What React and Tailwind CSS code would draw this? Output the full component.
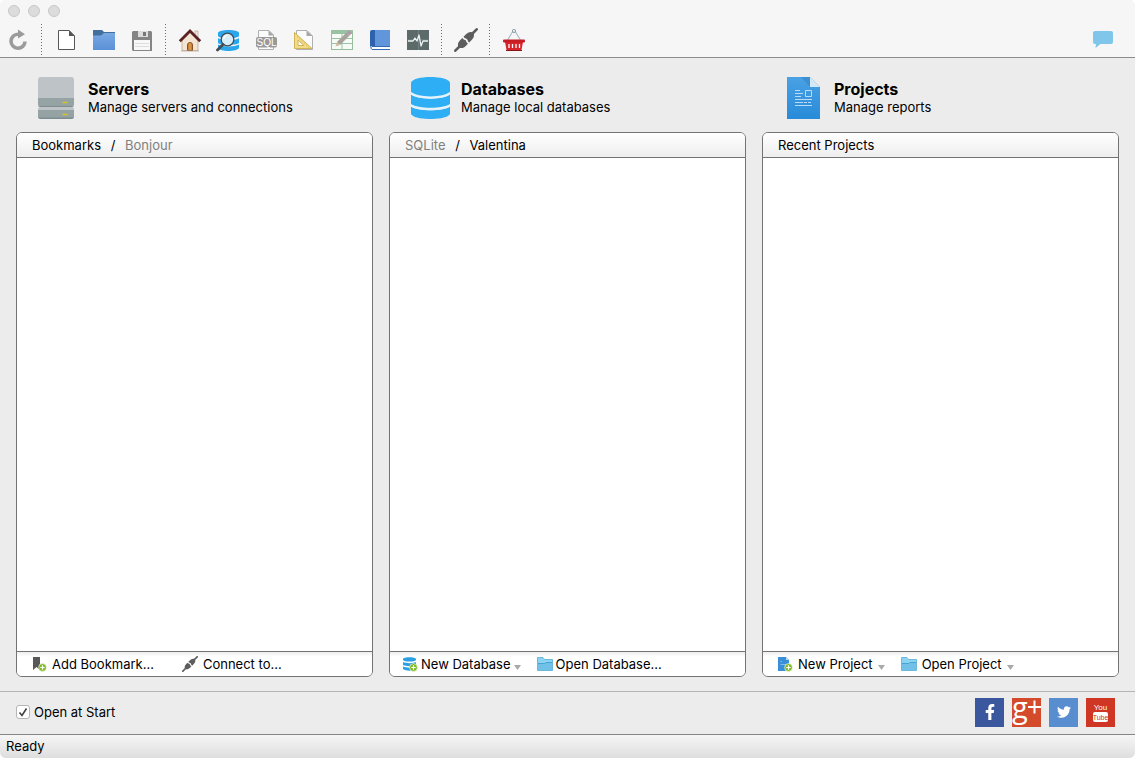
import React, { useState } from 'react';
import { FaFacebookF, FaTwitter } from 'react-icons/fa';

const Icon = ({ children, className = 'h-6 w-6', viewBox = '0 0 24 24' }) => (
  <svg className={className} viewBox={viewBox} fill="none" aria-hidden="true">
    {children}
  </svg>
);

const RefreshIcon = () => (
  <Icon>
    <path d="M13 6.200H12A7 7 0 1 0 19 13.500" stroke="#9b9b9b" strokeWidth="3.600" />
    <path d="M12 1.500 19 6.200 12 10.500Z" fill="#9b9b9b" />
  </Icon>
);

const NewIcon = () => (
  <Icon>
    <path d="M4.500 2.500H15L20.500 8V21.500H4.500Z" fill="#fff" stroke="#565656" />
    <path d="M15 2 21 8H15Z" fill="#565656" />
  </Icon>
);

const FolderIcon = () => (
  <Icon>
    <path d="M1 2H10L12 4H23V12H1Z" fill="#436f9c" />
    <path d="M1 7.500H9L12 5H23V22H1Z" fill="url(#folderFill)" />
    <defs>
      <linearGradient id="folderFill" x1="0" y1="5" x2="0" y2="22" gradientUnits="userSpaceOnUse">
        <stop stopColor="#79a9e4" />
        <stop offset="1" stopColor="#5a90d6" />
      </linearGradient>
    </defs>
  </Icon>
);

const SaveIcon = () => (
  <Icon>
    <path d="M3 3H21L22 4V23H3L2 22V4Z" fill="#858585" />
    <rect x="8" y="3" width="10" height="6" fill="#dcdcdc" />
    <rect x="13" y="4" width="3" height="4" fill="#777" />
    <rect x="4" y="12" width="16" height="10" fill="#f8f8f8" />
    <path d="M5 15.500H19M5 18.500H19" stroke="#ddd" />
  </Icon>
);

const HomeIcon = () => (
  <Icon>
    <rect x="17" y="3" width="3" height="7" fill="#f1e3d5" stroke="#b29d8f" strokeWidth=".6" />
    <path d="M4 12 12 4 20 12V22.500H4Z" fill="#f3e4d3" stroke="#b5a08e" strokeWidth=".7" />
    <path d="M1.800 13.200 12 3 22.200 13.200" stroke="#5b2124" strokeWidth="2.800" />
    <path d="M9.500 22.500V17Q9.500 14.500 12 14.500T14.500 17V22.500Z" fill="#c98238" stroke="#87501f" />
    <path d="M12 15V22" stroke="#e6a95c" />
    <path d="M3 23H21" stroke="#b9aa99" strokeWidth=".8" />
  </Icon>
);

const BrowseDbIcon = () => (
  <Icon>
    <path d="M2 5C2 1 23 1 23 5V8C22 11 3 11 2 8Z" fill="#29a6ec" />
    <path d="M2 10C5 13 20 13 23 10V15C20 17.500 5 17.500 2 15Z" fill="#29a6ec" />
    <path d="M2 16.500C6 19 19 19 23 16.500V20C21 24 4 24 2 20Z" fill="#29a6ec" />
    <circle cx="11.500" cy="11.500" r="6.300" fill="#d9edf8" stroke="#434c53" strokeWidth="1.300" />
    <path d="M7.500 11A4.500 4.500 0 0 1 11 7.500" stroke="#fff" strokeWidth="1.200" />
    <path d="M7 16.500 1.500 22" stroke="#454d54" strokeWidth="2.800" strokeLinecap="round" />
  </Icon>
);

const SqlIcon = () => (
  <Icon>
    <path d="M4.500 21.500V2.500H15L19.500 7V21.500Z" fill="#fbfbfb" stroke="#b0b0b0" />
    <path d="M14.500 2.500V7.500H20Z" fill="#a6a6a6" />
    <rect x="2" y="9" width="21" height="10.500" rx="2" fill="#999" />
    <text x="12.500" y="18" textAnchor="middle" fontSize="10" fill="#fff" className="font-['Liberation_Sans']">
      SQL
    </text>
  </Icon>
);

const DesignIcon = () => (
  <Icon>
    <path d="M4.500 2.500H15L20.500 8V21.500H4.500Z" fill="#fbfbfb" stroke="#b0b0b0" />
    <path d="M14.500 2.500V8H20.500Z" fill="#a8a8a8" />
    <path fillRule="evenodd" d="M2.500 4.500V20.500H20Z M6 12V17.500H12Z" fill="#f3dc88" stroke="#d1b456" />
    <path d="M5 8.500 16.500 19.500" stroke="#c9aa4b" strokeDasharray="1 1.500" />
  </Icon>
);

const TableIcon = () => (
  <Icon>
    <rect x="1.500" y="2.500" width="21" height="19" fill="#f7fbf7" stroke="#96bd9d" />
    <rect x="1" y="2" width="22" height="4" fill="#98c3a2" />
    <path d="M1 10.500H23M1 15.500H23M12 6V22" stroke="#9bc3a3" />
    <path d="M8.500 15.500 18 6" stroke="#a9a19b" strokeWidth="4.500" />
    <path d="M18 6 20.500 3.500" stroke="#ac9da9" strokeWidth="4.500" />
    <path d="M5.500 18.500 7 14 10 17Z" fill="#d3b99d" />
  </Icon>
);

const BookIcon = () => (
  <Icon>
    <path d="M4 2H22V18.500H4Z" fill="#6196da" />
    <path d="M2 4Q2 2 4 2H7V18H4Q2 18 2 20Z" fill="#2e62ad" />
    <path d="M4 18.500H22V21.500H4Q1.500 20 4 18.500Z" fill="#fff" />
    <path d="M22 18.500H4Q1.500 20 4 21.500H22" stroke="#346ab2" />
  </Icon>
);

const MonitorIcon = () => (
  <Icon>
    <rect x="1" y="2" width="22" height="20" fill="#5d6a6a" />
    <path d="M1 12H23M12.500 2V22" stroke="#718080" />
    <path d="M2 13H7L9 10 11 13 13 7 15 18 17 13H22" stroke="#edf2f2" strokeWidth="1.300" strokeLinejoin="round" />
  </Icon>
);

const PlugIcon = ({ className }) => (
  <Icon className={className}>
    <path d="M1.300 22.700 6 18M18 6 22.700 1.300" stroke="#5d5d5d" strokeWidth="2.600" strokeLinecap="round" />
    <g fill="#5d5d5d" transform="rotate(-45 12 12)">
      <path d="M1.500 12C3 8.500 5.500 8 8 8H10.800V10Q12.500 12 10.800 14V16H8C5.500 16 3 15.500 1.500 12Z" />
      <path d="M22.500 12C21 8.500 18.500 8 16 8H12.500V9.500Q14.300 12 12.500 14.500V16H16C18.500 16 21 15.500 22.500 12Z" />
    </g>
  </Icon>
);

const BasketIcon = () => (
  <Icon>
    <path d="M5 13 11 3M19 13 13 3" stroke="#aabdc8" strokeWidth="1.200" />
    <circle cx="12" cy="3" r="1.600" stroke="#8f9da7" />
    <path d="M3 14H21L19.500 22H4.500Z" fill="#d8252b" />
    <rect x="1" y="11.500" width="22" height="3" rx="1" fill="#c61c24" />
    <path d="M7 16V20M10.500 16V20M14 16V20M17.500 16V20" stroke="#fff" strokeWidth="1.300" />
    <path d="M4 22.500H20" stroke="#85171b" />
  </Icon>
);

const ChatIcon = () => (
  <Icon>
    <path d="M4 3H20Q22 3 22 5V14Q22 16 20 16H9.500L4.500 20 5 16H4Q2 16 2 14V5Q2 3 4 3Z" fill="#7fc6ea" />
  </Icon>
);

const ServersIcon = () => (
  <Icon className="h-[42px] w-12" viewBox="0 0 48 42">
    <path d="M5 3Q5 0 8 0H38Q41 0 41 3V22H5Z" fill="#bdc3c6" />
    <path d="M5 21H41V27Q41 29 39 29H7Q5 29 5 27Z" fill="#95a3a5" />
    <path d="M5 27Q5 29 7 29H39Q41 29 41 27V28Q41 30 39 30H7Q5 30 5 28Z" fill="#7d8c8e" />
    <path d="M5 32Q5 30 7 30H39Q41 30 41 32V33H5Z" fill="#bdc3c6" />
    <path d="M5 33H41V39Q41 42 38 42H8Q5 42 5 39Z" fill="#95a3a5" />
    <path d="M5 38.500Q5 40.500 8 40.500H38Q41 40.500 41 38.500V39Q41 42 38 42H8Q5 42 5 39Z" fill="#7d8c8e" />
    <path d="M30 25.500H34M30 37.500H34" stroke="#d8c524" strokeWidth="1.300" strokeLinecap="round" />
  </Icon>
);

const DatabasesIcon = () => (
  <Icon className="h-[42px] w-12" viewBox="0 0 48 42">
    <path d="M5 6C6 -2 43 -2 44 6V15C37 22 12 22 5 15Z" fill="#2eaef4" />
    <path d="M5 17.500C12 23 37 23 44 17.500V27C37 32 12 32 5 27Z" fill="#2eaef4" />
    <path d="M5 29.500C12 34.500 37 34.500 44 29.500V37C41 43.700 8 43.700 5 37Z" fill="#2eaef4" />
    <path d="M5 16.200C12 22 37 22 44 16.200M5 28.300C12 33.500 37 33.500 44 28.300" stroke="#e4f3fb" strokeWidth="2.200" />
  </Icon>
);

const ProjectsIcon = () => (
  <Icon className="h-[42px] w-12" viewBox="0 0 48 42">
    <defs>
      <linearGradient id="projectFill" x1="0" y1="0" x2="0" y2="42" gradientUnits="userSpaceOnUse">
        <stop stopColor="#4ba1e4" />
        <stop offset="1" stopColor="#278bd9" />
      </linearGradient>
    </defs>
    <path d="M8 0H31L41 10V42H8Z" fill="url(#projectFill)" />
    <path d="M22 0H31V10Z" fill="#2f7fc0" opacity=".5" />
    <path d="M31 0 41 10H31Z" fill="#d6e8f7" />
    <path d="M16 13.500H21M16 16.500H24M16 19.500H22M16 22.500H33M16 25.500H24M16 28.500H33M26.500 13.500H32.500V19.500H26.500Z" stroke="#b9dcf6" />
    <path d="M25 25.500H33" stroke="#b9dcf6" strokeDasharray="3 1" />
  </Icon>
);

const PlusBadge = () => (
  <>
    <circle cx="11.500" cy="11.500" r="3.900" fill="#7fba25" stroke="#fff" strokeWidth=".6" />
    <path d="M11.500 9.300V13.700M9.300 11.500H13.700" stroke="#fff" strokeWidth="1.200" />
  </>
);

const BookmarkAddIcon = () => (
  <Icon className="h-4 w-4" viewBox="0 0 16 16">
    <path d="M2 1H9V14L5.500 11 2 14Z" fill="#585858" />
    <PlusBadge />
  </Icon>
);

const DbAddIcon = () => (
  <Icon className="h-4 w-4" viewBox="0 0 16 16">
    <path d="M1 3C1 .5 14 .5 14 3V4C13 6 2 6 1 4Z" fill="#2b9fe3" />
    <path d="M1 6C4 7.500 11 7.500 14 6V9C11 10.500 4 10.500 1 9Z" fill="#2b9fe3" />
    <path d="M1 10.500C4 12 11 12 14 10.500V13C11 15.300 4 15.300 1 13Z" fill="#2b9fe3" />
    <PlusBadge />
  </Icon>
);

const ProjectAddIcon = () => (
  <Icon className="h-4 w-4" viewBox="0 0 16 16">
    <path d="M1 1H9L12 4V15H1Z" fill="#3a90d8" />
    <path d="M9 1 12 4H9Z" fill="#b9dcf5" />
    <path d="M3.500 5.500H5M3.500 8.500H9" stroke="#82bcea" />
    <PlusBadge />
  </Icon>
);

const OpenFolderIcon = () => (
  <Icon className="h-4 w-4" viewBox="0 0 16 16">
    <path d="M.5 1.500H6L7.500 3.500H15.500V14.500H.5Z" fill="#8bd3f3" stroke="#6cb9dd" />
    <path d="M1 7H8L9 6H15V14H1Z" fill="#71c0e8" />
    <path d="M1 7.500H8L9 6.500H15" stroke="#4aa4d0" />
  </Icon>
);

const toolGroups = [
  [{ label: 'Refresh', icon: RefreshIcon }],
  [
    { label: 'New', icon: NewIcon },
    { label: 'Open', icon: FolderIcon },
    { label: 'Save', icon: SaveIcon },
  ],
  [
    { label: 'Home', icon: HomeIcon },
    { label: 'Browse databases', icon: BrowseDbIcon },
    { label: 'SQL editor', icon: SqlIcon },
    { label: 'Diagram', icon: DesignIcon },
    { label: 'Table editor', icon: TableIcon },
    { label: 'Reference', icon: BookIcon },
    { label: 'Monitor', icon: MonitorIcon },
  ],
  [{ label: 'Connect', icon: PlugIcon }],
  [{ label: 'Store', icon: BasketIcon }],
];

const sections = [
  {
    title: 'Servers',
    subtitle: 'Manage servers and connections',
    icon: ServersIcon,
    tabs: ['Bookmarks', 'Bonjour'],
    active: 'Bookmarks',
    footer: 'gap-7 pl-3.5',
    actionGap: 'gap-[5px]',
    actions: [
      { label: 'Add Bookmark...', icon: BookmarkAddIcon },
      { label: 'Connect to...', icon: () => <PlugIcon className="h-4 w-4" /> },
    ],
  },
  {
    title: 'Databases',
    subtitle: 'Manage local databases',
    icon: DatabasesIcon,
    tabs: ['SQLite', 'Valentina'],
    active: 'Valentina',
    footer: 'gap-4 pl-3',
    actionGap: 'gap-[3px]',
    actions: [
      { label: 'New Database', icon: DbAddIcon, menu: true },
      { label: 'Open Database...', icon: OpenFolderIcon },
    ],
  },
  {
    title: 'Projects',
    subtitle: 'Manage reports',
    icon: ProjectsIcon,
    tabs: ['Recent Projects'],
    active: 'Recent Projects',
    footer: 'gap-4 pl-3.5',
    actionGap: 'gap-[5px]',
    actions: [
      { label: 'New Project', icon: ProjectAddIcon, menu: true },
      { label: 'Open Project', icon: OpenFolderIcon, menu: true },
    ],
  },
];

const Toolbar = () => (
  <header className="rounded-t-md border-b border-[#8c8c8c] bg-[#f6f6f6]">
    <div className="flex h-[22px] items-center gap-2 px-2">
      {['Close', 'Minimize', 'Zoom'].map((label) => (
        <button key={label} aria-label={label} className="h-3 w-3 rounded-full border border-[#c8c8c8] bg-[#dcdcdc]" />
      ))}
    </div>
    <div className="flex h-[35px] items-center pr-5 pl-1.5">
      {toolGroups.map((group, i) => (
        <React.Fragment key={i}>
          {i > 0 && (
            <div className="mr-3 ml-[11px] h-[31px] w-px bg-[repeating-linear-gradient(to_bottom,#6c6c6c_0_1px,transparent_1px_3px)]" />
          )}
          <div className="flex gap-3.5">
            {group.map(({ label, icon: ToolIcon }) => (
              <button key={label} aria-label={label}>
                <ToolIcon />
              </button>
            ))}
          </div>
        </React.Fragment>
      ))}
      <button aria-label="Feedback" className="ml-auto">
        <ChatIcon />
      </button>
    </div>
  </header>
);

const Section = ({ title, subtitle, icon: SectionIcon, tabs, active, footer, actionGap, actions }) => {
  const [tab, setTab] = useState(active);

  return (
    <section className="flex flex-col">
      <div className="flex items-center gap-[7px] pl-[17px]">
        <SectionIcon />
        <div>
          <h2 className="text-[16px] leading-[18px] font-bold">{title}</h2>
          <p className="leading-[18px]">{subtitle}</p>
        </div>
      </div>
      <div className="mt-[13px] flex flex-1 flex-col overflow-hidden rounded-md border border-[#737373] bg-white">
        <div className="flex h-[25px] items-center border-b border-[#737373] bg-linear-to-b from-white to-[#eeeeee] px-[15px]">
          {tabs.map((name, i) => (
            <React.Fragment key={name}>
              {i > 0 && <span className="w-6 text-center">/</span>}
              <button className={name === tab ? 'text-black' : 'text-[#808080]'} onClick={() => setTab(name)}>
                {name}
              </button>
            </React.Fragment>
          ))}
        </div>
        <div className="flex-1" />
        <div className={`flex h-[25px] items-center border-t border-[#737373] bg-linear-to-b from-[#eeeeee] to-white to-20% ${footer}`}>
          {actions.map(({ label, icon: ActionIcon, menu }) => (
            <button key={label} className={`flex items-center whitespace-nowrap ${actionGap}`}>
              <ActionIcon />
              {label}
              {menu && (
                <svg className="mt-1.5 h-[5px] w-[7px]" viewBox="0 0 7 5" aria-hidden="true">
                  <path d="M0 0H7L3.500 5Z" fill="#aaa" />
                </svg>
              )}
            </button>
          ))}
        </div>
      </div>
    </section>
  );
};

const Social = () => (
  <nav className="flex gap-2">
    <a href="#facebook" aria-label="Facebook" className="flex h-[29px] w-[29px] items-center justify-center bg-[#3b579d] text-white">
      <FaFacebookF className="h-4 w-4" />
    </a>
    <a href="#google-plus" aria-label="Google Plus" className="h-[29px] w-[29px] bg-[#d44b2c]">
      <svg className="h-full w-full overflow-visible" viewBox="0 0 29 29" fill="#fff">
        <text x="0" y="20" fontSize="29" className="font-['Open_Sans']">g</text>
        <path d="M16 8H21.500V2.500H23.500V8H29V10H23.500V15.500H21.500V10H16Z" />
      </svg>
    </a>
    <a href="#twitter" aria-label="Twitter" className="flex h-[29px] w-[29px] items-center justify-center bg-[#588dcf] text-white">
      <FaTwitter className="h-3.5 w-3.5" />
    </a>
    <a href="#youtube" aria-label="YouTube" className="h-[29px] w-[29px] bg-[#cf3623]">
      <svg className="h-full w-full" viewBox="0 0 29 29" fill="#fff" textAnchor="middle">
        <text x="14.500" y="12" fontSize="8" className="font-['Liberation_Sans']">You</text>
        <rect x="7" y="14" width="15" height="10" rx="2" />
        <text x="14.500" y="21.500" fontSize="7" fill="#cf3623" className="font-['Liberation_Sans']">Tube</text>
      </svg>
    </a>
  </nav>
);

const App = () => {
  const [openAtStart, setOpenAtStart] = useState(true);

  return (
    <div className="min-h-screen bg-white">
      <div className="flex min-h-screen flex-col rounded-md bg-[#ececec] font-['Inter',sans-serif] text-[13px] leading-4 text-black">
        <Toolbar />
        <main className="grid flex-1 grid-cols-3 gap-4 px-4 pt-[19px] pb-3.5">
          {sections.map((section) => (
            <Section key={section.title} {...section} />
          ))}
        </main>
        <div className="flex h-[43px] items-center justify-between border-t border-[#b4b4b4] pr-5 pb-0.5 pl-4">
          <label className="flex items-center gap-1">
            <span className="relative flex h-3.5 w-3.5">
              <input
                type="checkbox"
                className="peer h-3.5 w-3.5 appearance-none rounded-[3px] border border-[#b5b5b5] bg-white"
                checked={openAtStart}
                onChange={(e) => setOpenAtStart(e.target.checked)}
              />
              <svg className="pointer-events-none absolute inset-0 hidden peer-checked:block" viewBox="0 0 14 14" fill="none">
                <path d="M3.500 7.500 6 10.500 10.500 3.500" stroke="#404040" strokeWidth="1.600" />
              </svg>
            </span>
            Open at Start
          </label>
          <Social />
        </div>
        <footer className="flex h-6 items-center rounded-b-md border-t border-[#868686] bg-linear-to-b from-[#f6f6f6] to-[#dedede] px-1.5 pb-px">
          Ready
        </footer>
      </div>
    </div>
  );
};

export default App;
